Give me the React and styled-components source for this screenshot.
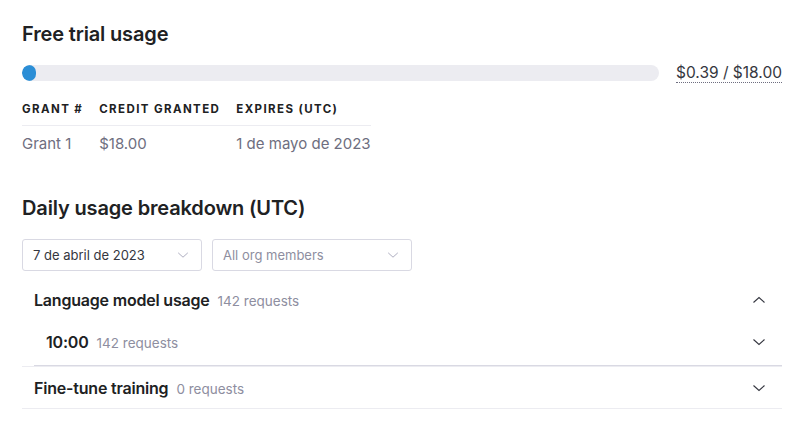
import React from 'react';
import styled, { createGlobalStyle } from 'styled-components';

const GlobalStyle = createGlobalStyle`
    body {
        margin: 0;
        background: #ffffff;
        font-family: Inter, "Noto Sans", sans-serif;
        color: #353740;
    }
`;

const Page = styled.div`
    padding: 20px 30px 0 22px;
`;

const Heading = styled.h2`
    margin: 0;
    font-size: 20px;
    font-weight: 600;
    line-height: 28px;
    color: #202123;
    letter-spacing: -0.15px;
`;

const UsageRow = styled.div`
    display: flex;
    align-items: center;
    gap: 17px;
    margin-top: 15px;
`;

const Track = styled.div`
    flex: 1;
    height: 16px;
    border-radius: 8px;
    background: #ececf1;
    overflow: hidden;
`;

const Fill = styled.div`
    height: 100%;
    min-width: 14px;
    border-radius: 8px;
    background: #2b8ed6;
`;

const Amount = styled.span`
    font-size: 15.5px;
    color: #353740;
    border-bottom: 1px dotted #6e6e80;
    line-height: 19px;
`;

const GrantTable = styled.table`
    border-collapse: collapse;
    margin-top: 19px;
`;

const HeadCell = styled.th`
    text-align: left;
    font-size: 11.5px;
    line-height: 14px;
    font-weight: 700;
    letter-spacing: 1.4px;
    text-transform: uppercase;
    color: #202123;
    padding: 0 16px 9px 0;
    border-bottom: 1px solid #ececf1;
    white-space: nowrap;
    &:last-child { padding-right: 0; }
`;

const Cell = styled.td`
    font-size: 15px;
    line-height: 18px;
    color: #6e6e80;
    padding: 9px 16px 0 0;
    white-space: nowrap;
    &:last-child { padding-right: 0; }
`;

const Section = styled.div`
    margin-top: 41px;
`;

const Filters = styled.div`
    display: flex;
    gap: 10px;
    margin-top: 17px;
`;

const Select = styled.div`
    width: ${(p) => p.$w}px;
    height: 32px;
    box-sizing: border-box;
    border: 1px solid #d9d9e3;
    border-radius: 3px;
    display: flex;
    align-items: center;
    justify-content: space-between;
    padding: 0 11px 0 10px;
    font-size: 13px;
    color: ${(p) => (p.$placeholder ? '#8e8ea0' : '#353740')};
`;

const Accordion = styled.div`
    margin-top: 8px;
`;

const Group = styled.div`
    border-bottom: 1px solid #ececf1;
`;

const RowHeader = styled.div`
    display: flex;
    align-items: center;
    justify-content: space-between;
    height: ${(p) => p.$h}px;
    box-sizing: border-box;
    padding: 0 15px ${(p) => p.$pb || 0}px 12px;
`;

const Item = styled.div`
    margin-left: 12px;
    border-bottom: 1px solid #d9d9e3;
`;

const Label = styled.div`
    display: flex;
    align-items: baseline;
    gap: 8px;
`;

const Title = styled.span`
    font-size: 16px;
    font-weight: 600;
    color: #202123;
    letter-spacing: -0.2px;
`;

const Count = styled.span`
    font-size: 13.5px;
    color: #8e8ea0;
`;

const Chevron = ({ up, size = 16, color = '#353740' }) => (
    <svg width={size} height={size} viewBox="0 0 16 16" fill="none">
        <path
            d={up ? 'M2.5 10.5L8 5.5l5.5 5' : 'M2.5 5.5L8 10.5l5.5-5'}
            stroke={color}
            strokeWidth="1.1"
        />
    </svg>
);

const App = () => {
    const used = 0.39;
    const total = 18;

    return (
        <Page>
            <GlobalStyle />
            <Heading>Free trial usage</Heading>
            <UsageRow>
                <Track>
                    <Fill style={{ width: `${(used / total) * 100}%` }} />
                </Track>
                <Amount>$0.39 / $18.00</Amount>
            </UsageRow>
            <GrantTable>
                <thead>
                    <tr>
                        <HeadCell>Grant #</HeadCell>
                        <HeadCell>Credit granted</HeadCell>
                        <HeadCell>Expires (UTC)</HeadCell>
                    </tr>
                </thead>
                <tbody>
                    <tr>
                        <Cell>Grant 1</Cell>
                        <Cell>$18.00</Cell>
                        <Cell>1 de mayo de 2023</Cell>
                    </tr>
                </tbody>
            </GrantTable>

            <Section>
                <Heading>Daily usage breakdown (UTC)</Heading>
                <Filters>
                    <Select $w={180}>
                        7 de abril de 2023
                        <Chevron size={14} color="#acacbe" />
                    </Select>
                    <Select $w={200} $placeholder>
                        All org members
                        <Chevron size={14} color="#acacbe" />
                    </Select>
                </Filters>

                <Accordion>
                    <Group>
                        <RowHeader $h={42}>
                            <Label>
                                <Title>Language model usage</Title>
                                <Count>142 requests</Count>
                            </Label>
                            <Chevron up />
                        </RowHeader>
                        <Item>
                            <RowHeader $h={44} $pb={2}>
                                <Label>
                                    <Title>10:00</Title>
                                    <Count>142 requests</Count>
                                </Label>
                                <Chevron />
                            </RowHeader>
                        </Item>
                    </Group>
                    <Group>
                        <RowHeader $h={41}>
                            <Label>
                                <Title>Fine-tune training</Title>
                                <Count>0 requests</Count>
                            </Label>
                            <Chevron />
                        </RowHeader>
                    </Group>
                </Accordion>
            </Section>
        </Page>
    );
};

export default App;
